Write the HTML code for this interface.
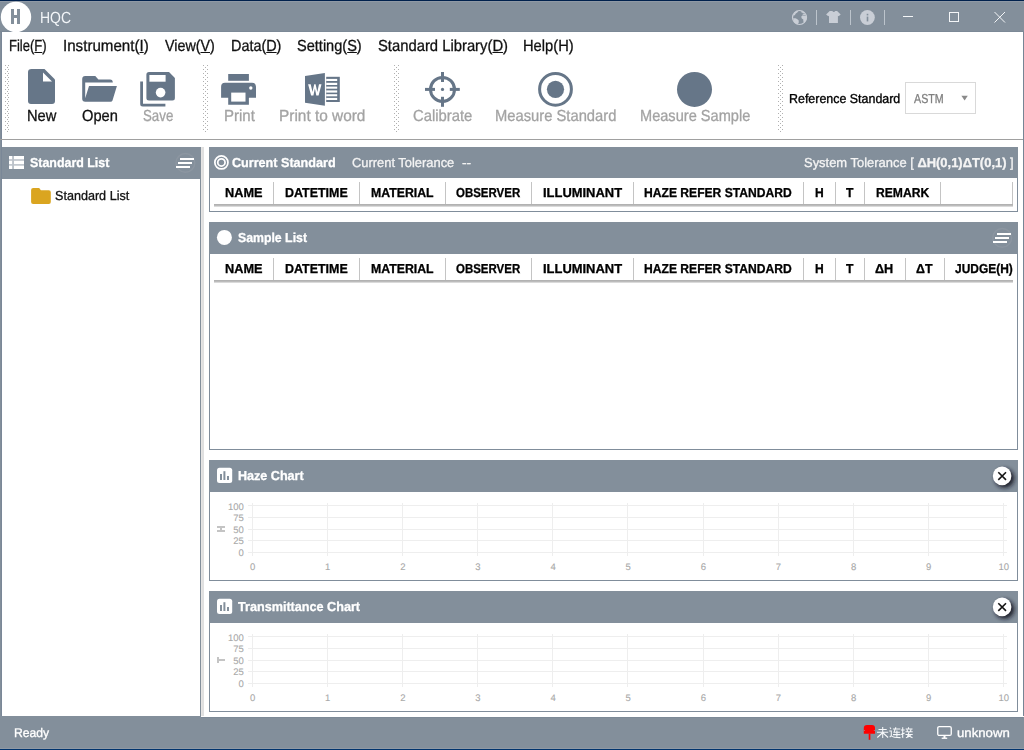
<!DOCTYPE html>
<html><head><meta charset="utf-8"><style>
html,body{margin:0;padding:0;}
body{width:1024px;height:750px;position:relative;overflow:hidden;background:#fff;font-family:"Liberation Sans",sans-serif;}
.t{position:absolute;white-space:nowrap;transform-origin:0 0;text-rendering:geometricPrecision;}
</style></head><body>
<div style="position:absolute;left:0px;top:0px;width:1024px;height:1px;background:#00214d;"></div>
<div style="position:absolute;left:0px;top:1px;width:1024px;height:31px;background:#838f9b;"></div>
<div style="position:absolute;left:0px;top:1px;width:1024px;height:1px;background:#8f99a5;"></div>
<div style="position:absolute;left:0px;top:31px;width:1024px;height:1px;background:#7c8996;"></div>
<div style="position:absolute;left:0px;top:32px;width:2px;height:684px;background:#838f9b;"></div>
<div style="position:absolute;left:1px;top:32px;width:1px;height:684px;background:#7a8797;"></div>
<div style="position:absolute;left:1023px;top:32px;width:1px;height:684px;background:#768595;"></div>
<div style="position:absolute;left:0px;top:716px;width:201px;height:1px;background:#838f9b;"></div>
<div style="position:absolute;left:0px;top:717px;width:1024px;height:32px;background:#838f9b;"></div>
<div style="position:absolute;left:201px;top:717px;width:822px;height:1px;background:#7b8896;"></div>
<div style="position:absolute;left:0px;top:748px;width:1024px;height:1px;background:#8f99a5;"></div>
<div style="position:absolute;left:0px;top:749px;width:1024px;height:1px;background:#00336d;"></div>
<svg style="position:absolute;left:0;top:0" width="40" height="34" shape-rendering="crispEdges">
<circle cx="16" cy="17" r="15.2" fill="#fff" shape-rendering="auto"/>
<rect x="11" y="9" width="3" height="15" fill="#838f9b"/>
<rect x="17" y="9" width="3" height="15" fill="#838f9b"/>
<rect x="14" y="15" width="3" height="3" fill="#838f9b"/>
</svg>
<div class="t" style="left:40.00px;top:11px;font-size:16px;line-height:16px;color:#f2f5f8;transform:scaleX(0.8732);">HQC</div>
<svg style="position:absolute;left:780px;top:0" width="244" height="32">
<g fill="#c9ced6" transform="translate(-780,0)">
<circle cx="799.5" cy="17.5" r="7.0" fill="none" stroke="#c9ced6" stroke-width="1.2"/>
<path d="M793.2 15.5 L794.5 12.5 L797 10.8 L798.2 11.2 L797.3 12.6 L795.8 13.6 L794.8 15.2 Z"/>
<path d="M801.2 11.2 L803.5 11.8 L804.5 13.2 L803 13.5 L802.3 12.6 L801 12.3 Z M802.5 14.2 L805 14 L805.3 15 L802.8 15 Z"/>
<path d="M801.2 16.8 L802.2 15.6 L804.5 15.6 L806.3 16 L806.8 18.5 L806 21 L804.3 22.5 L803.3 21.5 L803.3 19.5 L801.8 18.6 Z"/>
<path d="M793.2 18.2 L795.5 18.2 L797 19 L798.6 20.2 L798.8 22.5 L797.5 24.2 L795.5 23.5 L793.8 21.5 Z"/>
<path d="M829.7 11.1 L832.3 11.1 Q833.8 12.9 835.3 11.1 L837.1 11.1 L840.7 14.4 L838.6 16.3 L837.9 15.8 V22.9 H829 V15.8 L828.3 16.3 L826.1 14.4 Z"/>
</g>
<rect x="36" y="10" width="1" height="15" fill="#bcc4cc"/>
<rect x="70" y="10" width="1" height="15" fill="#bcc4cc"/>
<circle cx="87.4" cy="17.5" r="7.4" fill="#c9ced6"/>
<rect x="86.7" y="13.8" width="1.6" height="1.6" fill="#838f9b"/>
<rect x="86.7" y="16.6" width="1.6" height="4.8" fill="#838f9b"/>
<rect x="104" y="10" width="1" height="15" fill="#bcc4cc"/>
<g stroke="#f4f6f8" stroke-width="1" fill="none">
<line x1="123" y1="16.5" x2="133" y2="16.5"/>
<rect x="169.5" y="12.5" width="9" height="9"/>
<line x1="214.5" y1="12" x2="225" y2="22.5"/>
<line x1="225" y1="12" x2="214.5" y2="22.5"/>
</g>
</svg>
<div class="t" style="left:9.00px;top:39px;font-size:16px;line-height:16px;color:#111;transform:scaleX(0.8151);-webkit-text-stroke:0.3px #111;">File(<span style="text-decoration:underline">F</span>)</div>
<div class="t" style="left:63.00px;top:39px;font-size:16px;line-height:16px;color:#111;transform:scaleX(0.9455);-webkit-text-stroke:0.3px #111;">Instrument(<span style="text-decoration:underline">I</span>)</div>
<div class="t" style="left:164.70px;top:39px;font-size:16px;line-height:16px;color:#111;transform:scaleX(0.8933);-webkit-text-stroke:0.3px #111;">View(<span style="text-decoration:underline">V</span>)</div>
<div class="t" style="left:230.90px;top:39px;font-size:16px;line-height:16px;color:#111;transform:scaleX(0.9000);-webkit-text-stroke:0.3px #111;">Data(<span style="text-decoration:underline">D</span>)</div>
<div class="t" style="left:297.20px;top:39px;font-size:16px;line-height:16px;color:#111;transform:scaleX(0.9097);-webkit-text-stroke:0.3px #111;">Setting(<span style="text-decoration:underline">S</span>)</div>
<div class="t" style="left:377.50px;top:39px;font-size:16px;line-height:16px;color:#111;transform:scaleX(0.9253);-webkit-text-stroke:0.3px #111;">Standard Library(<span style="text-decoration:underline">D</span>)</div>
<div class="t" style="left:523.10px;top:39px;font-size:16px;line-height:16px;color:#111;transform:scaleX(0.9188);-webkit-text-stroke:0.3px #111;">Help(H)</div>
<div style="position:absolute;left:0px;top:139px;width:1024px;height:1px;background:#a0a0a0;"></div>
<div style="position:absolute;left:1023px;top:32px;width:1px;height:684px;background:#768595;"></div>
<svg style="position:absolute;left:0;top:0" width="800" height="140" shape-rendering="crispEdges"><g fill="#b0b0b0"><rect x="5" y="65" width="1" height="1"/><rect x="8" y="65" width="1" height="1"/><rect x="5" y="69" width="1" height="1"/><rect x="8" y="69" width="1" height="1"/><rect x="5" y="73" width="1" height="1"/><rect x="8" y="73" width="1" height="1"/><rect x="5" y="77" width="1" height="1"/><rect x="8" y="77" width="1" height="1"/><rect x="5" y="81" width="1" height="1"/><rect x="8" y="81" width="1" height="1"/><rect x="5" y="85" width="1" height="1"/><rect x="8" y="85" width="1" height="1"/><rect x="5" y="89" width="1" height="1"/><rect x="8" y="89" width="1" height="1"/><rect x="5" y="93" width="1" height="1"/><rect x="8" y="93" width="1" height="1"/><rect x="5" y="97" width="1" height="1"/><rect x="8" y="97" width="1" height="1"/><rect x="5" y="101" width="1" height="1"/><rect x="8" y="101" width="1" height="1"/><rect x="5" y="105" width="1" height="1"/><rect x="8" y="105" width="1" height="1"/><rect x="5" y="109" width="1" height="1"/><rect x="8" y="109" width="1" height="1"/><rect x="5" y="113" width="1" height="1"/><rect x="8" y="113" width="1" height="1"/><rect x="5" y="117" width="1" height="1"/><rect x="8" y="117" width="1" height="1"/><rect x="5" y="121" width="1" height="1"/><rect x="8" y="121" width="1" height="1"/><rect x="5" y="125" width="1" height="1"/><rect x="8" y="125" width="1" height="1"/><rect x="5" y="129" width="1" height="1"/><rect x="8" y="129" width="1" height="1"/><rect x="6.5" y="67" width="1" height="1"/><rect x="6.5" y="71" width="1" height="1"/><rect x="6.5" y="75" width="1" height="1"/><rect x="6.5" y="79" width="1" height="1"/><rect x="6.5" y="83" width="1" height="1"/><rect x="6.5" y="87" width="1" height="1"/><rect x="6.5" y="91" width="1" height="1"/><rect x="6.5" y="95" width="1" height="1"/><rect x="6.5" y="99" width="1" height="1"/><rect x="6.5" y="103" width="1" height="1"/><rect x="6.5" y="107" width="1" height="1"/><rect x="6.5" y="111" width="1" height="1"/><rect x="6.5" y="115" width="1" height="1"/><rect x="6.5" y="119" width="1" height="1"/><rect x="6.5" y="123" width="1" height="1"/><rect x="6.5" y="127" width="1" height="1"/><rect x="6.5" y="131" width="1" height="1"/></g></svg>
<svg style="position:absolute;left:0;top:0" width="800" height="140" shape-rendering="crispEdges"><g fill="#b0b0b0"><rect x="203" y="65" width="1" height="1"/><rect x="207" y="65" width="1" height="1"/><rect x="203" y="69" width="1" height="1"/><rect x="207" y="69" width="1" height="1"/><rect x="203" y="73" width="1" height="1"/><rect x="207" y="73" width="1" height="1"/><rect x="203" y="77" width="1" height="1"/><rect x="207" y="77" width="1" height="1"/><rect x="203" y="81" width="1" height="1"/><rect x="207" y="81" width="1" height="1"/><rect x="203" y="85" width="1" height="1"/><rect x="207" y="85" width="1" height="1"/><rect x="203" y="89" width="1" height="1"/><rect x="207" y="89" width="1" height="1"/><rect x="203" y="93" width="1" height="1"/><rect x="207" y="93" width="1" height="1"/><rect x="203" y="97" width="1" height="1"/><rect x="207" y="97" width="1" height="1"/><rect x="203" y="101" width="1" height="1"/><rect x="207" y="101" width="1" height="1"/><rect x="203" y="105" width="1" height="1"/><rect x="207" y="105" width="1" height="1"/><rect x="203" y="109" width="1" height="1"/><rect x="207" y="109" width="1" height="1"/><rect x="203" y="113" width="1" height="1"/><rect x="207" y="113" width="1" height="1"/><rect x="203" y="117" width="1" height="1"/><rect x="207" y="117" width="1" height="1"/><rect x="203" y="121" width="1" height="1"/><rect x="207" y="121" width="1" height="1"/><rect x="203" y="125" width="1" height="1"/><rect x="207" y="125" width="1" height="1"/><rect x="203" y="129" width="1" height="1"/><rect x="207" y="129" width="1" height="1"/><rect x="205" y="67" width="1" height="1"/><rect x="205" y="71" width="1" height="1"/><rect x="205" y="75" width="1" height="1"/><rect x="205" y="79" width="1" height="1"/><rect x="205" y="83" width="1" height="1"/><rect x="205" y="87" width="1" height="1"/><rect x="205" y="91" width="1" height="1"/><rect x="205" y="95" width="1" height="1"/><rect x="205" y="99" width="1" height="1"/><rect x="205" y="103" width="1" height="1"/><rect x="205" y="107" width="1" height="1"/><rect x="205" y="111" width="1" height="1"/><rect x="205" y="115" width="1" height="1"/><rect x="205" y="119" width="1" height="1"/><rect x="205" y="123" width="1" height="1"/><rect x="205" y="127" width="1" height="1"/><rect x="205" y="131" width="1" height="1"/></g></svg>
<svg style="position:absolute;left:0;top:0" width="800" height="140" shape-rendering="crispEdges"><g fill="#b0b0b0"><rect x="394" y="65" width="1" height="1"/><rect x="398" y="65" width="1" height="1"/><rect x="394" y="69" width="1" height="1"/><rect x="398" y="69" width="1" height="1"/><rect x="394" y="73" width="1" height="1"/><rect x="398" y="73" width="1" height="1"/><rect x="394" y="77" width="1" height="1"/><rect x="398" y="77" width="1" height="1"/><rect x="394" y="81" width="1" height="1"/><rect x="398" y="81" width="1" height="1"/><rect x="394" y="85" width="1" height="1"/><rect x="398" y="85" width="1" height="1"/><rect x="394" y="89" width="1" height="1"/><rect x="398" y="89" width="1" height="1"/><rect x="394" y="93" width="1" height="1"/><rect x="398" y="93" width="1" height="1"/><rect x="394" y="97" width="1" height="1"/><rect x="398" y="97" width="1" height="1"/><rect x="394" y="101" width="1" height="1"/><rect x="398" y="101" width="1" height="1"/><rect x="394" y="105" width="1" height="1"/><rect x="398" y="105" width="1" height="1"/><rect x="394" y="109" width="1" height="1"/><rect x="398" y="109" width="1" height="1"/><rect x="394" y="113" width="1" height="1"/><rect x="398" y="113" width="1" height="1"/><rect x="394" y="117" width="1" height="1"/><rect x="398" y="117" width="1" height="1"/><rect x="394" y="121" width="1" height="1"/><rect x="398" y="121" width="1" height="1"/><rect x="394" y="125" width="1" height="1"/><rect x="398" y="125" width="1" height="1"/><rect x="394" y="129" width="1" height="1"/><rect x="398" y="129" width="1" height="1"/><rect x="396" y="67" width="1" height="1"/><rect x="396" y="71" width="1" height="1"/><rect x="396" y="75" width="1" height="1"/><rect x="396" y="79" width="1" height="1"/><rect x="396" y="83" width="1" height="1"/><rect x="396" y="87" width="1" height="1"/><rect x="396" y="91" width="1" height="1"/><rect x="396" y="95" width="1" height="1"/><rect x="396" y="99" width="1" height="1"/><rect x="396" y="103" width="1" height="1"/><rect x="396" y="107" width="1" height="1"/><rect x="396" y="111" width="1" height="1"/><rect x="396" y="115" width="1" height="1"/><rect x="396" y="119" width="1" height="1"/><rect x="396" y="123" width="1" height="1"/><rect x="396" y="127" width="1" height="1"/><rect x="396" y="131" width="1" height="1"/></g></svg>
<svg style="position:absolute;left:0;top:0" width="800" height="140" shape-rendering="crispEdges"><g fill="#b0b0b0"><rect x="778" y="65" width="1" height="1"/><rect x="782" y="65" width="1" height="1"/><rect x="778" y="69" width="1" height="1"/><rect x="782" y="69" width="1" height="1"/><rect x="778" y="73" width="1" height="1"/><rect x="782" y="73" width="1" height="1"/><rect x="778" y="77" width="1" height="1"/><rect x="782" y="77" width="1" height="1"/><rect x="778" y="81" width="1" height="1"/><rect x="782" y="81" width="1" height="1"/><rect x="778" y="85" width="1" height="1"/><rect x="782" y="85" width="1" height="1"/><rect x="778" y="89" width="1" height="1"/><rect x="782" y="89" width="1" height="1"/><rect x="778" y="93" width="1" height="1"/><rect x="782" y="93" width="1" height="1"/><rect x="778" y="97" width="1" height="1"/><rect x="782" y="97" width="1" height="1"/><rect x="778" y="101" width="1" height="1"/><rect x="782" y="101" width="1" height="1"/><rect x="778" y="105" width="1" height="1"/><rect x="782" y="105" width="1" height="1"/><rect x="778" y="109" width="1" height="1"/><rect x="782" y="109" width="1" height="1"/><rect x="778" y="113" width="1" height="1"/><rect x="782" y="113" width="1" height="1"/><rect x="778" y="117" width="1" height="1"/><rect x="782" y="117" width="1" height="1"/><rect x="778" y="121" width="1" height="1"/><rect x="782" y="121" width="1" height="1"/><rect x="778" y="125" width="1" height="1"/><rect x="782" y="125" width="1" height="1"/><rect x="778" y="129" width="1" height="1"/><rect x="782" y="129" width="1" height="1"/><rect x="780" y="67" width="1" height="1"/><rect x="780" y="71" width="1" height="1"/><rect x="780" y="75" width="1" height="1"/><rect x="780" y="79" width="1" height="1"/><rect x="780" y="83" width="1" height="1"/><rect x="780" y="87" width="1" height="1"/><rect x="780" y="91" width="1" height="1"/><rect x="780" y="95" width="1" height="1"/><rect x="780" y="99" width="1" height="1"/><rect x="780" y="103" width="1" height="1"/><rect x="780" y="107" width="1" height="1"/><rect x="780" y="111" width="1" height="1"/><rect x="780" y="115" width="1" height="1"/><rect x="780" y="119" width="1" height="1"/><rect x="780" y="123" width="1" height="1"/><rect x="780" y="127" width="1" height="1"/><rect x="780" y="131" width="1" height="1"/></g></svg>
<div class="t" style="left:26.90px;top:109px;font-size:16px;line-height:16px;color:#111;transform:scaleX(0.9183);-webkit-text-stroke:0.3px #111;">New</div>
<div class="t" style="left:81.70px;top:109px;font-size:16px;line-height:16px;color:#111;transform:scaleX(0.9150);-webkit-text-stroke:0.3px #111;">Open</div>
<div class="t" style="left:142.70px;top:109px;font-size:16px;line-height:16px;color:#a3a3a3;transform:scaleX(0.8301);-webkit-text-stroke:0.3px #a3a3a3;">Save</div>
<div class="t" style="left:224.00px;top:109px;font-size:16px;line-height:16px;color:#a3a3a3;transform:scaleX(0.9369);-webkit-text-stroke:0.3px #a3a3a3;">Print</div>
<div class="t" style="left:279.00px;top:109px;font-size:16px;line-height:16px;color:#a3a3a3;transform:scaleX(0.9624);-webkit-text-stroke:0.3px #a3a3a3;">Print to word</div>
<div class="t" style="left:412.70px;top:109px;font-size:16px;line-height:16px;color:#a3a3a3;transform:scaleX(0.9266);-webkit-text-stroke:0.3px #a3a3a3;">Calibrate</div>
<div class="t" style="left:494.80px;top:109px;font-size:16px;line-height:16px;color:#a3a3a3;transform:scaleX(0.9223);-webkit-text-stroke:0.3px #a3a3a3;">Measure Standard</div>
<div class="t" style="left:639.70px;top:109px;font-size:16px;line-height:16px;color:#a3a3a3;transform:scaleX(0.9116);-webkit-text-stroke:0.3px #a3a3a3;">Measure Sample</div>
<div class="t" style="left:788.70px;top:92px;font-size:13px;line-height:13px;color:#000;transform:scaleX(0.9564);-webkit-text-stroke:0.35px #000;">Reference Standard</div>
<div style="position:absolute;left:905px;top:82px;width:71px;height:32px;background:#fff;box-sizing:border-box;border:1px solid #d9d9d9;"></div>
<div class="t" style="left:914.30px;top:92px;font-size:13px;line-height:13px;color:#808080;transform:scaleX(0.8221);-webkit-text-stroke:0.3px #808080;">ASTM</div>
<svg style="position:absolute;left:958px;top:94px" width="12" height="8"><path d="M3.4 1.7 H9.8 L6.6 6.6 Z" fill="#8a8a8a"/></svg>
<svg style="position:absolute;left:0;top:0" width="780" height="140">
<g fill="#667688">
<path d="M31.5 69 H44.5 L55 79.5 V101 Q55 104 52 104 H31 Q28 104 28 101 V72 Q28 69 31.5 69 Z"/>
<path d="M82.2 79 Q82.2 76 85.2 76 H95.3 L98.4 79.4 H110 Q112.8 79.4 112.8 82.5 H85.2 V98.3 L89 86.1 H116.9 L112.5 100.5 Q112 101.8 110.5 101.8 H85.2 Q82.2 101.8 82.2 98.8 Z"/>
<path d="M149 72 H169 L174.9 78.1 V98 Q174.9 100.5 172.4 100.5 H149 Q146.4 100.5 146.4 98 V74.5 Q146.4 72 149 72 Z"/>
<path d="M140.2 81.4 H143 V103.8 H165.4 V106.6 H142.7 Q140.2 106.6 140.2 104.1 Z"/>
<rect x="228.2" y="74" width="20.7" height="6.8"/>
<path d="M225 82.8 H252 Q256 82.8 256 86.8 V97.7 H248.9 V104.8 H228.2 V97.7 H221.1 V86.8 Q221.1 82.8 225 82.8 Z"/>
<path d="M305 76.1 L324.9 73.1 V105.8 L305 102.7 Z"/>
<rect x="326.2" y="76.8" width="13.6" height="25.2"/>
<circle cx="442.5" cy="89.4" r="12" fill="none" stroke="#667688" stroke-width="3"/>
<rect x="441" y="72" width="3" height="10"/>
<rect x="441" y="96.8" width="3" height="10"/>
<rect x="425" y="87.9" width="10" height="3"/>
<rect x="449.8" y="87.9" width="10" height="3"/>
<circle cx="442.5" cy="89.4" r="1.6"/>
<circle cx="555.5" cy="89.3" r="15.9" fill="none" stroke="#667688" stroke-width="3"/>
<circle cx="555.5" cy="89.3" r="8.6"/>
<circle cx="694.5" cy="89.4" r="17.5"/>
</g>
<g fill="#fff">
<path d="M43 72.5 L52 81.5 H43 Z"/>
<rect x="149.4" y="75" width="16.2" height="6.7"/>
<circle cx="160.6" cy="92.6" r="4.8"/>
<rect x="231.2" y="92.6" width="14.3" height="9"/>
<circle cx="250.8" cy="88" r="1.7"/>
<rect x="326.2" y="78.9" width="11" height="2.1"/>
<rect x="326.2" y="82.8" width="11" height="2.2"/>
<rect x="326.2" y="86.6" width="11" height="2.1"/>
<rect x="326.2" y="90.4" width="11" height="2.2"/>
<rect x="326.2" y="94.2" width="11" height="2.1"/>
<rect x="326.2" y="97.9" width="11" height="2.1"/>
<path d="M308.1 84.2 H310.7 L312.5 92 L314.2 84.2 H315.6 L317.3 92 L319 84.2 H321.5 L318.6 95.4 H316.3 L314.9 88.6 L313.4 95.4 H311.1 Z"/>
</g>
</svg>
<div style="position:absolute;left:2px;top:147px;width:199px;height:32px;background:#838f9b;"></div>
<div style="position:absolute;left:200px;top:179px;width:1px;height:537px;background:#838f9b;"></div>
<div style="position:absolute;left:201px;top:147px;width:3px;height:569px;background:#e0e0e0;"></div>
<div style="position:absolute;left:201px;top:147px;width:1px;height:569px;background:#e6e5e4;"></div>
<svg style="position:absolute;left:0;top:140px" width="200" height="40">
<rect x="9" y="16" width="15" height="13" fill="#fff"/>
<rect x="12.1" y="16" width="1.9" height="13" fill="#bcc3ca"/>
<rect x="9" y="19.2" width="15" height="1.6" fill="#bcc3ca"/>
<rect x="9" y="24.1" width="15" height="1.6" fill="#bcc3ca"/>
<circle cx="185.4" cy="22.9" r="9.4" fill="none" stroke="#8c96a1" stroke-width="1.4"/>
<rect x="180" y="18" width="14" height="2" fill="#fff"/><rect x="178" y="22" width="14" height="2" fill="#fff"/><rect x="176" y="26" width="14" height="2" fill="#fff"/>
</svg>
<div class="t" style="left:30.20px;top:156px;font-size:13px;line-height:13px;font-weight:bold;color:#fff;transform:scaleX(0.9552);-webkit-text-stroke:0.3px #fff;">Standard List</div>
<svg style="position:absolute;left:30px;top:186px" width="24" height="20"><path d="M1.1 4 Q1.1 1.9 3.2 1.9 H9.2 L10.9 4.2 H18.8 Q20.8 4.2 20.8 6.2 V15.9 Q20.8 17.9 18.8 17.9 H3.1 Q1.1 17.9 1.1 15.9 Z" fill="#daa520"/></svg>
<div class="t" style="left:54.50px;top:189px;font-size:13px;line-height:13px;color:#111;transform:scaleX(0.9690);-webkit-text-stroke:0.3px #111;">Standard List</div>
<div style="position:absolute;left:209px;top:147px;width:809px;height:31px;background:#838f9b;"></div>
<div style="position:absolute;left:209px;top:178px;width:1px;height:34px;background:#808d9b;"></div>
<div style="position:absolute;left:1017px;top:178px;width:1px;height:34px;background:#808d9b;"></div>
<div style="position:absolute;left:209px;top:211px;width:809px;height:1px;background:#808d9b;"></div>
<div style="position:absolute;left:209px;top:222px;width:809px;height:32px;background:#838f9b;"></div>
<div style="position:absolute;left:209px;top:254px;width:1px;height:196px;background:#808d9b;"></div>
<div style="position:absolute;left:1017px;top:254px;width:1px;height:196px;background:#808d9b;"></div>
<div style="position:absolute;left:209px;top:449px;width:809px;height:1px;background:#808d9b;"></div>
<div style="position:absolute;left:209px;top:460px;width:809px;height:32px;background:#838f9b;"></div>
<div style="position:absolute;left:209px;top:492px;width:1px;height:89px;background:#808d9b;"></div>
<div style="position:absolute;left:1017px;top:492px;width:1px;height:89px;background:#808d9b;"></div>
<div style="position:absolute;left:209px;top:580px;width:809px;height:1px;background:#808d9b;"></div>
<div style="position:absolute;left:209px;top:591px;width:809px;height:32px;background:#838f9b;"></div>
<div style="position:absolute;left:209px;top:623px;width:1px;height:89px;background:#808d9b;"></div>
<div style="position:absolute;left:1017px;top:623px;width:1px;height:89px;background:#808d9b;"></div>
<div style="position:absolute;left:209px;top:711px;width:809px;height:1px;background:#808d9b;"></div>
<svg style="position:absolute;left:210px;top:150px" width="24" height="26"><circle cx="11.4" cy="12.4" r="6.55" fill="none" stroke="#fff" stroke-width="1.75"/><circle cx="11.4" cy="12.4" r="3.65" fill="none" stroke="#fff" stroke-width="1.75"/></svg>
<div class="t" style="left:232.40px;top:156px;font-size:13px;line-height:13px;font-weight:bold;color:#fff;transform:scaleX(0.9694);-webkit-text-stroke:0.3px #fff;">Current Standard</div>
<div class="t" style="left:352.40px;top:156px;font-size:13px;line-height:13px;color:#f4f4f4;transform:scaleX(0.9920);-webkit-text-stroke:0.3px #f4f4f4;">Current Tolerance</div>
<div class="t" style="left:461.80px;top:156px;font-size:13px;line-height:13px;color:#f4f4f4;transform:scaleX(1.0667);-webkit-text-stroke:0.3px #f4f4f4;">--</div>
<div class="t" style="left:804.40px;top:156px;font-size:13px;line-height:13px;color:#f4f4f4;transform:scaleX(0.9955);-webkit-text-stroke:0.3px #f4f4f4;">System Tolerance [ <b>ΔH(0,1)ΔT(0,1)</b> ]</div>
<svg style="position:absolute;left:210px;top:224px" width="30" height="28"><circle cx="14.4" cy="13.4" r="7.5" fill="#fff"/></svg>
<div class="t" style="left:238.00px;top:231px;font-size:13px;line-height:13px;font-weight:bold;color:#fff;transform:scaleX(0.9452);-webkit-text-stroke:0.3px #fff;">Sample List</div>
<svg style="position:absolute;left:980px;top:220px" width="38" height="36">
<circle cx="22.2" cy="17.9" r="9.4" fill="none" stroke="#8c96a1" stroke-width="1.4"/>
<rect x="17" y="13" width="14" height="2" fill="#fff"/><rect x="15" y="17" width="14" height="2" fill="#fff"/><rect x="13" y="21" width="14" height="2" fill="#fff"/>
</svg>
<div style="position:absolute;left:273px;top:182px;width:1px;height:22px;background:#c4c4c4;"></div>
<div style="position:absolute;left:359px;top:182px;width:1px;height:22px;background:#c4c4c4;"></div>
<div style="position:absolute;left:445px;top:182px;width:1px;height:22px;background:#c4c4c4;"></div>
<div style="position:absolute;left:531px;top:182px;width:1px;height:22px;background:#c4c4c4;"></div>
<div style="position:absolute;left:633px;top:182px;width:1px;height:22px;background:#c4c4c4;"></div>
<div style="position:absolute;left:803px;top:182px;width:1px;height:22px;background:#c4c4c4;"></div>
<div style="position:absolute;left:835px;top:182px;width:1px;height:22px;background:#c4c4c4;"></div>
<div style="position:absolute;left:864px;top:182px;width:1px;height:22px;background:#c4c4c4;"></div>
<div style="position:absolute;left:940px;top:182px;width:1px;height:22px;background:#c4c4c4;"></div>
<div style="position:absolute;left:1012px;top:182px;width:1px;height:22px;background:#c4c4c4;"></div>
<div style="position:absolute;left:214px;top:204px;width:799px;height:1px;background:#b2b2b2;"></div>
<div style="position:absolute;left:214px;top:205px;width:799px;height:1px;background:#bcbcbc;"></div>
<div style="position:absolute;left:214px;top:206px;width:799px;height:1px;background:#dadada;"></div>
<div class="t" style="left:224.50px;top:186px;font-size:13px;line-height:13px;font-weight:bold;color:#000;transform:scaleX(0.9804);-webkit-text-stroke:0.3px #000;">NAME</div>
<div class="t" style="left:285.00px;top:186px;font-size:13px;line-height:13px;font-weight:bold;color:#000;transform:scaleX(0.9588);-webkit-text-stroke:0.3px #000;">DATETIME</div>
<div class="t" style="left:370.50px;top:186px;font-size:13px;line-height:13px;font-weight:bold;color:#000;transform:scaleX(0.9449);-webkit-text-stroke:0.3px #000;">MATERIAL</div>
<div class="t" style="left:455.90px;top:186px;font-size:13px;line-height:13px;font-weight:bold;color:#000;transform:scaleX(0.8825);-webkit-text-stroke:0.3px #000;">OBSERVER</div>
<div class="t" style="left:542.60px;top:186px;font-size:13px;line-height:13px;font-weight:bold;color:#000;transform:scaleX(0.9953);-webkit-text-stroke:0.3px #000;">ILLUMINANT</div>
<div class="t" style="left:644.20px;top:186px;font-size:13px;line-height:13px;font-weight:bold;color:#000;transform:scaleX(0.9311);-webkit-text-stroke:0.3px #000;">HAZE REFER STANDARD</div>
<div class="t" style="left:814.60px;top:186px;font-size:13px;line-height:13px;font-weight:bold;color:#000;transform:scaleX(0.9280);-webkit-text-stroke:0.3px #000;">H</div>
<div class="t" style="left:845.80px;top:186px;font-size:13px;line-height:13px;font-weight:bold;color:#000;transform:scaleX(0.9375);-webkit-text-stroke:0.3px #000;">T</div>
<div class="t" style="left:875.60px;top:186px;font-size:13px;line-height:13px;font-weight:bold;color:#000;transform:scaleX(0.9325);-webkit-text-stroke:0.3px #000;">REMARK</div>
<div style="position:absolute;left:273px;top:258px;width:1px;height:22px;background:#c4c4c4;"></div>
<div style="position:absolute;left:359px;top:258px;width:1px;height:22px;background:#c4c4c4;"></div>
<div style="position:absolute;left:445px;top:258px;width:1px;height:22px;background:#c4c4c4;"></div>
<div style="position:absolute;left:531px;top:258px;width:1px;height:22px;background:#c4c4c4;"></div>
<div style="position:absolute;left:633px;top:258px;width:1px;height:22px;background:#c4c4c4;"></div>
<div style="position:absolute;left:803px;top:258px;width:1px;height:22px;background:#c4c4c4;"></div>
<div style="position:absolute;left:835px;top:258px;width:1px;height:22px;background:#c4c4c4;"></div>
<div style="position:absolute;left:864px;top:258px;width:1px;height:22px;background:#c4c4c4;"></div>
<div style="position:absolute;left:905px;top:258px;width:1px;height:22px;background:#c4c4c4;"></div>
<div style="position:absolute;left:944px;top:258px;width:1px;height:22px;background:#c4c4c4;"></div>
<div style="position:absolute;left:214px;top:280px;width:799px;height:1px;background:#b2b2b2;"></div>
<div style="position:absolute;left:214px;top:281px;width:799px;height:1px;background:#bcbcbc;"></div>
<div style="position:absolute;left:214px;top:282px;width:799px;height:1px;background:#dadada;"></div>
<div class="t" style="left:224.50px;top:262px;font-size:13px;line-height:13px;font-weight:bold;color:#000;transform:scaleX(0.9804);-webkit-text-stroke:0.3px #000;">NAME</div>
<div class="t" style="left:285.00px;top:262px;font-size:13px;line-height:13px;font-weight:bold;color:#000;transform:scaleX(0.9588);-webkit-text-stroke:0.3px #000;">DATETIME</div>
<div class="t" style="left:370.50px;top:262px;font-size:13px;line-height:13px;font-weight:bold;color:#000;transform:scaleX(0.9449);-webkit-text-stroke:0.3px #000;">MATERIAL</div>
<div class="t" style="left:455.90px;top:262px;font-size:13px;line-height:13px;font-weight:bold;color:#000;transform:scaleX(0.8825);-webkit-text-stroke:0.3px #000;">OBSERVER</div>
<div class="t" style="left:542.60px;top:262px;font-size:13px;line-height:13px;font-weight:bold;color:#000;transform:scaleX(0.9953);-webkit-text-stroke:0.3px #000;">ILLUMINANT</div>
<div class="t" style="left:644.20px;top:262px;font-size:13px;line-height:13px;font-weight:bold;color:#000;transform:scaleX(0.9311);-webkit-text-stroke:0.3px #000;">HAZE REFER STANDARD</div>
<div class="t" style="left:814.60px;top:262px;font-size:13px;line-height:13px;font-weight:bold;color:#000;transform:scaleX(0.9280);-webkit-text-stroke:0.3px #000;">H</div>
<div class="t" style="left:845.80px;top:262px;font-size:13px;line-height:13px;font-weight:bold;color:#000;transform:scaleX(0.9375);-webkit-text-stroke:0.3px #000;">T</div>
<div class="t" style="left:875.30px;top:262px;font-size:13px;line-height:13px;font-weight:bold;color:#000;transform:scaleX(0.9760);-webkit-text-stroke:0.3px #000;">ΔH</div>
<div class="t" style="left:916.25px;top:262px;font-size:13px;line-height:13px;font-weight:bold;color:#000;transform:scaleX(0.9536);-webkit-text-stroke:0.3px #000;">ΔT</div>
<div class="t" style="left:955.00px;top:262px;font-size:13px;line-height:13px;font-weight:bold;color:#000;transform:scaleX(0.9193);-webkit-text-stroke:0.3px #000;">JUDGE(H)</div>
<div class="t" style="left:14.40px;top:727px;font-size:12.5px;line-height:12.5px;color:#fff;transform:scaleX(0.9744);-webkit-text-stroke:0.3px #fff;">Ready</div>
<div class="t" style="left:957.00px;top:727px;font-size:12.5px;line-height:12.5px;color:#fff;transform:scaleX(1.0540);-webkit-text-stroke:0.3px #fff;">unknown</div>
<svg style="position:absolute;left:210px;top:460px" width="30" height="32">
<rect x="7" y="7.8" width="15.2" height="15.2" rx="2.5" fill="#fff"/>
<rect x="10" y="14" width="2" height="6" fill="#838f9b"/>
<rect x="13.4" y="11.2" width="2" height="8.8" fill="#838f9b"/>
<rect x="17" y="16" width="2" height="4" fill="#838f9b"/>
</svg>
<div class="t" style="left:238.40px;top:469px;font-size:13px;line-height:13px;font-weight:bold;color:#fff;transform:scaleX(0.9665);-webkit-text-stroke:0.3px #fff;">Haze Chart</div>
<svg style="position:absolute;left:985px;top:458px" width="36" height="36">
<defs><filter id="sh460" x="-50%" y="-50%" width="200%" height="200%"><feGaussianBlur stdDeviation="2.1"/></filter></defs>
<circle cx="19.6" cy="20.2" r="9.6" fill="#121820" opacity="0.95" filter="url(#sh460)"/>
<circle cx="17.1" cy="17.9" r="9.3" fill="#fff"/>
<path d="M13.3 14.2 L21 21.9 M21 14.2 L13.3 21.9" stroke="#151515" stroke-width="1.6" fill="none"/>
</svg>
<svg style="position:absolute;left:0;top:0" width="1024" height="750" shape-rendering="crispEdges"><rect x="248" y="504.9" width="759" height="1" fill="#eeeeee"/><rect x="248" y="516.9" width="759" height="1" fill="#eeeeee"/><rect x="248" y="528.9" width="759" height="1" fill="#eeeeee"/><rect x="248" y="539.9" width="759" height="1" fill="#eeeeee"/><rect x="248" y="551.9" width="759" height="1" fill="#eeeeee"/><rect x="251.80" y="502.7" width="1" height="53" fill="#eeeeee"/><rect x="326.92" y="502.7" width="1" height="53" fill="#eeeeee"/><rect x="402.04" y="502.7" width="1" height="53" fill="#eeeeee"/><rect x="477.16" y="502.7" width="1" height="53" fill="#eeeeee"/><rect x="552.28" y="502.7" width="1" height="53" fill="#eeeeee"/><rect x="627.40" y="502.7" width="1" height="53" fill="#eeeeee"/><rect x="702.52" y="502.7" width="1" height="53" fill="#eeeeee"/><rect x="777.64" y="502.7" width="1" height="53" fill="#eeeeee"/><rect x="852.76" y="502.7" width="1" height="53" fill="#eeeeee"/><rect x="927.88" y="502.7" width="1" height="53" fill="#eeeeee"/><rect x="1003.00" y="502.7" width="1" height="53" fill="#eeeeee"/></svg>
<div class="t" style="left:227.93px;top:503px;font-size:9.5px;line-height:9.5px;color:#a9a9a9;-webkit-text-stroke:0.1px #a9a9a9;">100</div>
<div class="t" style="left:233.18px;top:514px;font-size:9.5px;line-height:9.5px;color:#a9a9a9;-webkit-text-stroke:0.1px #a9a9a9;">75</div>
<div class="t" style="left:233.18px;top:526px;font-size:9.5px;line-height:9.5px;color:#a9a9a9;-webkit-text-stroke:0.1px #a9a9a9;">50</div>
<div class="t" style="left:233.18px;top:537px;font-size:9.5px;line-height:9.5px;color:#a9a9a9;-webkit-text-stroke:0.1px #a9a9a9;">25</div>
<div class="t" style="left:238.55px;top:549px;font-size:9.5px;line-height:9.5px;color:#a9a9a9;-webkit-text-stroke:0.1px #a9a9a9;">0</div>
<div class="t" style="left:249.98px;top:563px;font-size:9.5px;line-height:9.5px;color:#a9a9a9;-webkit-text-stroke:0.1px #a9a9a9;">0</div>
<div class="t" style="left:325.10px;top:563px;font-size:9.5px;line-height:9.5px;color:#a9a9a9;-webkit-text-stroke:0.1px #a9a9a9;">1</div>
<div class="t" style="left:400.22px;top:563px;font-size:9.5px;line-height:9.5px;color:#a9a9a9;-webkit-text-stroke:0.1px #a9a9a9;">2</div>
<div class="t" style="left:475.34px;top:563px;font-size:9.5px;line-height:9.5px;color:#a9a9a9;-webkit-text-stroke:0.1px #a9a9a9;">3</div>
<div class="t" style="left:550.45px;top:563px;font-size:9.5px;line-height:9.5px;color:#a9a9a9;-webkit-text-stroke:0.1px #a9a9a9;">4</div>
<div class="t" style="left:625.58px;top:563px;font-size:9.5px;line-height:9.5px;color:#a9a9a9;-webkit-text-stroke:0.1px #a9a9a9;">5</div>
<div class="t" style="left:700.69px;top:563px;font-size:9.5px;line-height:9.5px;color:#a9a9a9;-webkit-text-stroke:0.1px #a9a9a9;">6</div>
<div class="t" style="left:775.82px;top:563px;font-size:9.5px;line-height:9.5px;color:#a9a9a9;-webkit-text-stroke:0.1px #a9a9a9;">7</div>
<div class="t" style="left:850.93px;top:563px;font-size:9.5px;line-height:9.5px;color:#a9a9a9;-webkit-text-stroke:0.1px #a9a9a9;">8</div>
<div class="t" style="left:926.06px;top:563px;font-size:9.5px;line-height:9.5px;color:#a9a9a9;-webkit-text-stroke:0.1px #a9a9a9;">9</div>
<div class="t" style="left:998.49px;top:563px;font-size:9.5px;line-height:9.5px;color:#a9a9a9;-webkit-text-stroke:0.1px #a9a9a9;">10</div>
<div style="position:absolute;left:217px;top:526px;width:8px;height:2px;background:#c4c4c4;"></div>
<div style="position:absolute;left:217px;top:530px;width:8px;height:2px;background:#c4c4c4;"></div>
<div style="position:absolute;left:220px;top:528px;width:2px;height:2px;background:#c4c4c4;"></div>
<svg style="position:absolute;left:210px;top:591px" width="30" height="32">
<rect x="7" y="7.8" width="15.2" height="15.2" rx="2.5" fill="#fff"/>
<rect x="10" y="14" width="2" height="6" fill="#838f9b"/>
<rect x="13.4" y="11.2" width="2" height="8.8" fill="#838f9b"/>
<rect x="17" y="16" width="2" height="4" fill="#838f9b"/>
</svg>
<div class="t" style="left:238.40px;top:600px;font-size:13px;line-height:13px;font-weight:bold;color:#fff;transform:scaleX(0.9710);-webkit-text-stroke:0.3px #fff;">Transmittance Chart</div>
<svg style="position:absolute;left:985px;top:589px" width="36" height="36">
<defs><filter id="sh591" x="-50%" y="-50%" width="200%" height="200%"><feGaussianBlur stdDeviation="2.1"/></filter></defs>
<circle cx="19.6" cy="20.2" r="9.6" fill="#121820" opacity="0.95" filter="url(#sh591)"/>
<circle cx="17.1" cy="17.9" r="9.3" fill="#fff"/>
<path d="M13.3 14.2 L21 21.9 M21 14.2 L13.3 21.9" stroke="#151515" stroke-width="1.6" fill="none"/>
</svg>
<svg style="position:absolute;left:0;top:0" width="1024" height="750" shape-rendering="crispEdges"><rect x="248" y="635.9" width="759" height="1" fill="#eeeeee"/><rect x="248" y="647.9" width="759" height="1" fill="#eeeeee"/><rect x="248" y="659.9" width="759" height="1" fill="#eeeeee"/><rect x="248" y="670.9" width="759" height="1" fill="#eeeeee"/><rect x="248" y="682.9" width="759" height="1" fill="#eeeeee"/><rect x="251.80" y="633.7" width="1" height="53" fill="#eeeeee"/><rect x="326.92" y="633.7" width="1" height="53" fill="#eeeeee"/><rect x="402.04" y="633.7" width="1" height="53" fill="#eeeeee"/><rect x="477.16" y="633.7" width="1" height="53" fill="#eeeeee"/><rect x="552.28" y="633.7" width="1" height="53" fill="#eeeeee"/><rect x="627.40" y="633.7" width="1" height="53" fill="#eeeeee"/><rect x="702.52" y="633.7" width="1" height="53" fill="#eeeeee"/><rect x="777.64" y="633.7" width="1" height="53" fill="#eeeeee"/><rect x="852.76" y="633.7" width="1" height="53" fill="#eeeeee"/><rect x="927.88" y="633.7" width="1" height="53" fill="#eeeeee"/><rect x="1003.00" y="633.7" width="1" height="53" fill="#eeeeee"/></svg>
<div class="t" style="left:227.93px;top:634px;font-size:9.5px;line-height:9.5px;color:#a9a9a9;-webkit-text-stroke:0.1px #a9a9a9;">100</div>
<div class="t" style="left:233.18px;top:645px;font-size:9.5px;line-height:9.5px;color:#a9a9a9;-webkit-text-stroke:0.1px #a9a9a9;">75</div>
<div class="t" style="left:233.18px;top:657px;font-size:9.5px;line-height:9.5px;color:#a9a9a9;-webkit-text-stroke:0.1px #a9a9a9;">50</div>
<div class="t" style="left:233.18px;top:668px;font-size:9.5px;line-height:9.5px;color:#a9a9a9;-webkit-text-stroke:0.1px #a9a9a9;">25</div>
<div class="t" style="left:238.55px;top:680px;font-size:9.5px;line-height:9.5px;color:#a9a9a9;-webkit-text-stroke:0.1px #a9a9a9;">0</div>
<div class="t" style="left:249.98px;top:694px;font-size:9.5px;line-height:9.5px;color:#a9a9a9;-webkit-text-stroke:0.1px #a9a9a9;">0</div>
<div class="t" style="left:325.10px;top:694px;font-size:9.5px;line-height:9.5px;color:#a9a9a9;-webkit-text-stroke:0.1px #a9a9a9;">1</div>
<div class="t" style="left:400.22px;top:694px;font-size:9.5px;line-height:9.5px;color:#a9a9a9;-webkit-text-stroke:0.1px #a9a9a9;">2</div>
<div class="t" style="left:475.34px;top:694px;font-size:9.5px;line-height:9.5px;color:#a9a9a9;-webkit-text-stroke:0.1px #a9a9a9;">3</div>
<div class="t" style="left:550.45px;top:694px;font-size:9.5px;line-height:9.5px;color:#a9a9a9;-webkit-text-stroke:0.1px #a9a9a9;">4</div>
<div class="t" style="left:625.58px;top:694px;font-size:9.5px;line-height:9.5px;color:#a9a9a9;-webkit-text-stroke:0.1px #a9a9a9;">5</div>
<div class="t" style="left:700.69px;top:694px;font-size:9.5px;line-height:9.5px;color:#a9a9a9;-webkit-text-stroke:0.1px #a9a9a9;">6</div>
<div class="t" style="left:775.82px;top:694px;font-size:9.5px;line-height:9.5px;color:#a9a9a9;-webkit-text-stroke:0.1px #a9a9a9;">7</div>
<div class="t" style="left:850.93px;top:694px;font-size:9.5px;line-height:9.5px;color:#a9a9a9;-webkit-text-stroke:0.1px #a9a9a9;">8</div>
<div class="t" style="left:926.06px;top:694px;font-size:9.5px;line-height:9.5px;color:#a9a9a9;-webkit-text-stroke:0.1px #a9a9a9;">9</div>
<div class="t" style="left:998.49px;top:694px;font-size:9.5px;line-height:9.5px;color:#a9a9a9;-webkit-text-stroke:0.1px #a9a9a9;">10</div>
<div style="position:absolute;left:217px;top:657px;width:2px;height:6px;background:#c4c4c4;"></div>
<div style="position:absolute;left:219px;top:659px;width:6px;height:2px;background:#c4c4c4;"></div>
<svg style="position:absolute;left:860px;top:720px" width="60" height="24">
<path d="M3.8 13.8 V8 Q3.8 5 7 5 H12 Q15 5 15 8 V13.8 Z" fill="#ff0000"/>
<rect x="3.8" y="10" width="1.2" height="1" fill="#c46060"/>
<rect x="13.8" y="10" width="1.2" height="1" fill="#c46060"/>
<rect x="8.7" y="13.8" width="1.7" height="6" fill="#ff0000"/>
<g transform="translate(876.7,-720) translate(-860,727)" stroke="#f6f8fa" stroke-width="1.05" fill="none" stroke-linecap="butt">
<path d="M1.8 2.5 H10 M0.3 5.3 H11.5 M6 0 V11 M5.6 6 L0.6 10.5 M6.4 6 L11.4 10.5"/>
<g transform="translate(12,0)">
<path d="M1.2 0.5 L2.3 1.8 M0.5 4 H2.6 V8.6 L1 10.2 M2.6 8.8 Q4.5 10.6 11.8 10.6 M4.2 2 H11.6 M7.2 0.3 L5.3 5.2 H11.2 M4.3 7.6 H11.8 M8.2 3.5 V9.8"/>
</g>
<g transform="translate(24,0)">
<path d="M0.2 3 H4 M2 0.2 V10.2 L1.2 9.6 M0.2 7.4 L4 5.9 M7.8 0.2 V1.6 M5 2 H11.8 M6.2 2.6 L6.9 4.3 M10.4 2.6 L9.7 4.3 M4.8 4.8 H12 M4.8 7.4 H12 M8.3 5.2 L6.6 10.5 M6.8 7.8 Q9.5 9.6 11.8 10.8 M10.3 7.6 Q8.8 10.4 5.2 10.8"/>
</g>
</g>
</svg>
<svg style="position:absolute;left:930px;top:720px" width="30" height="24">
<rect x="7.75" y="6.55" width="13.5" height="8.9" rx="1.5" fill="none" stroke="#fff" stroke-width="1.3"/>
<rect x="13.5" y="16" width="2" height="2" fill="#fff"/>
<rect x="11.7" y="17.6" width="5.5" height="1.3" fill="#fff"/>
</svg>
</body></html>
